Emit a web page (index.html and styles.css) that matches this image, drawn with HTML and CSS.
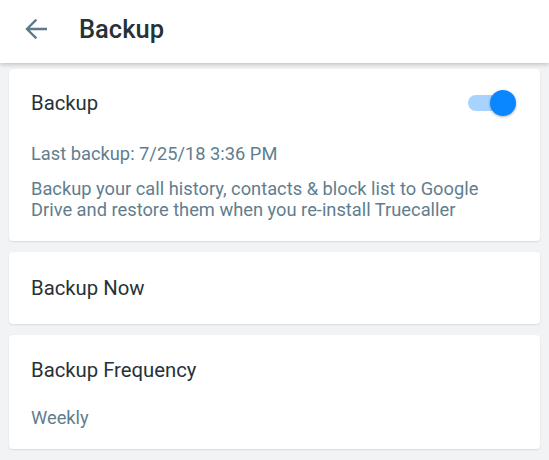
FILE: index.html
```html
<!DOCTYPE html>
<html>
<head>
<meta charset="utf-8">
<link rel="stylesheet" href="styles.css">
</head>
<body>
<header class="appbar">
  <svg class="back" width="22" height="20" viewBox="0 0 22 20">
    <path d="M21 10H2.5M10.5 1.5L2 10l8.5 8.5" fill="none" stroke="#5b7a8b" stroke-width="2.4" stroke-linecap="square"/>
  </svg>
  <h1 class="title">Backup</h1>
</header>
<main class="content">
  <section class="card card-main">
    <div class="row">
      <div class="card-title">Backup</div>
      <div class="toggle"><span class="track"></span><span class="thumb"></span></div>
    </div>
    <div class="last">Last backup: 7/25/18 3:36 PM</div>
    <div class="desc">Backup your call history, contacts &amp; block list to Google Drive and restore them when you re-install Truecaller</div>
  </section>
  <section class="card card-now">
    <div class="card-title">Backup Now</div>
  </section>
  <section class="card card-freq">
    <div class="card-title">Backup Frequency</div>
    <div class="value">Weekly</div>
  </section>
</main>
</body>
</html>
```
FILE: styles.css
```css
html, body {
  margin: 0;
  padding: 0;
}
body {
  width: 549px;
  height: 460px;
  background: #f1f3f5;
  font-family: Roboto, "Noto Sans", sans-serif;
  overflow: hidden;
}
.appbar {
  height: 63px;
  background: #ffffff;
  display: flex;
  align-items: center;
  box-shadow: 0 2px 4px rgba(0,0,0,0.18);
  position: relative;
  z-index: 1;
}
.back {
  margin-left: 25px;
  margin-top: -6px;
}
.title {
  margin: 0 0 0 32px;
  font-size: 25.5px;
  font-weight: 500;
  color: #263238;
  margin-top: -6px;
}
.content {
  padding: 6px 9px 0 9px;
  display: flex;
  flex-direction: column;
  gap: 11px;
}
.card {
  background: #ffffff;
  border-radius: 4px;
  box-shadow: 0 1px 2px rgba(0,0,0,0.10);
  padding: 0 26px 0 22px;
}
.card-main {
  height: 172px;
  box-sizing: border-box;
  padding-top: 22px;
}
.row {
  display: flex;
  align-items: center;
  justify-content: space-between;
  height: 24px;
}
.card-title {
  font-size: 20.3px;
  line-height: 24px;
  color: #263238;
}
.toggle {
  position: relative;
  width: 48px;
  height: 26px;
  margin-right: -2px;
}
.track {
  position: absolute;
  left: 0;
  top: 5px;
  width: 40px;
  height: 16px;
  border-radius: 8px;
  background: #a9d3ff;
}
.thumb {
  position: absolute;
  right: 0;
  top: 0;
  width: 26px;
  height: 26px;
  border-radius: 50%;
  background: #0a87ff;
  box-shadow: 0 1px 3px rgba(0,0,0,0.3);
}
.last {
  margin-top: 28px;
  font-size: 18.3px;
  line-height: 21px;
  color: #5f7e8e;
}
.desc {
  margin-top: 14px;
  font-size: 18.3px;
  line-height: 21px;
  color: #5f7e8e;
}
.card-now {
  height: 72px;
  display: flex;
  align-items: center;
}
.card-freq {
  height: 114px;
  box-sizing: border-box;
  padding-top: 23px;
}
.value {
  margin-top: 25px;
  font-size: 18.3px;
  line-height: 21px;
  color: #5f7e8e;
}
```
